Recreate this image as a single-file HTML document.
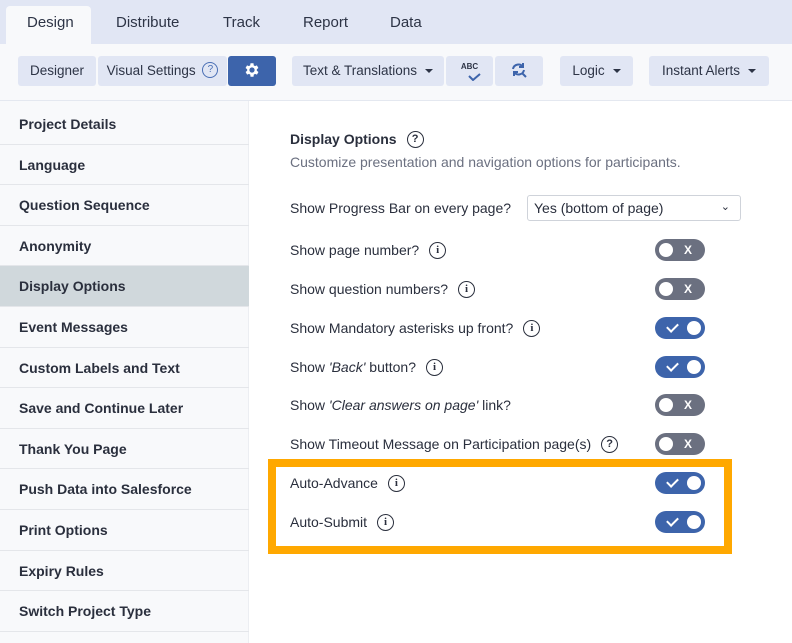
<!DOCTYPE html>
<html><head><style>
*{box-sizing:border-box;margin:0;padding:0}
body{width:792px;height:643px;overflow:hidden;font-family:"Liberation Sans",sans-serif;background:#fff;color:#2a2f3d;position:relative}
.top{position:absolute;left:0;top:0;width:792px;height:44px;background:#e1e6f4}
.tab{position:absolute;top:14px;font-size:15px;color:#2d3446}
.tabA{position:absolute;left:6px;top:6px;width:85px;height:38px;background:#f8f9fb;border-radius:4px 4px 0 0}
.bar{position:absolute;left:0;top:44px;width:792px;height:57px;background:#f8f9fb;border-bottom:1px solid #e4e8f0}
.btn{position:absolute;top:56px;height:30px;background:#e1e6f4;border-radius:3px;font-size:13.5px;color:#2d3446;line-height:30px;text-align:center}
.car{display:inline-block;width:0;height:0;border-left:4px solid transparent;border-right:4px solid transparent;border-top:4px solid #2d3446;vertical-align:middle;margin-left:8px}
.side{position:absolute;left:0;top:101px;width:249px;height:542px;background:#f8f9fb;border-right:1px solid #eceef2}
.it{position:absolute;left:0;width:249px;height:40.6px;line-height:40px;padding-left:19px;font-size:14px;font-weight:bold;color:#2a2f3d;border-bottom:1px solid #e4e6ea}
.row{position:absolute;left:290px;font-size:14px;color:#2a2f3d;height:18px;line-height:18px;display:flex;align-items:center;white-space:nowrap}
.tg{position:absolute;left:655px;width:50px;height:22px;border-radius:11px}
.off{background:#6b7080}.on{background:#3d64ab}
.off::before{content:"";position:absolute;left:4px;top:4px;width:14px;height:14px;border-radius:50%;background:#fff}
.off::after{content:"X";position:absolute;left:29px;top:4px;font-size:12px;font-weight:bold;color:#fff}
.on::before{content:"";position:absolute;left:32px;top:4px;width:14px;height:14px;border-radius:50%;background:#fff}
.on::after{content:"";position:absolute;left:12px;top:6px;width:9px;height:5px;border-left:2px solid #fff;border-bottom:2px solid #fff;transform:rotate(-45deg)}
.i{display:inline-block;flex:none;width:17px;height:17px;border:1.7px solid #2a2f3d;border-radius:50%;font-size:11px;font-weight:bold;text-align:center;line-height:14px;margin-left:10px;font-family:"Liberation Serif",serif}
.q{font-family:"Liberation Sans",sans-serif}
</style></head><body>
<div class="top"></div>
<div class="tabA"></div>
<div class="tab" style="left:27px">Design</div>
<div class="tab" style="left:116px">Distribute</div>
<div class="tab" style="left:223px">Track</div>
<div class="tab" style="left:303px">Report</div>
<div class="tab" style="left:390px">Data</div>
<div class="bar"></div>
<div class="btn" style="left:18px;width:78px">Designer</div>
<div class="btn" style="left:98px;width:129px">Visual Settings <span style="display:inline-block;width:16px;height:16px;border:1.5px solid #4a6fb5;border-radius:50%;font-size:10px;line-height:13px;color:#4a6fb5;vertical-align:middle;margin-left:3px;position:relative;top:-1px">?</span></div>
<div class="btn" style="left:228px;width:48px;background:#3d64ab"><svg width="18" height="18" viewBox="0 0 24 24" style="vertical-align:-4px"><path fill="#fff" d="M19.4 13a7.5 7.5 0 0 0 0-2l2.1-1.6-2-3.5-2.5 1a7 7 0 0 0-1.7-1L15 3h-4l-.4 2.9a7 7 0 0 0-1.7 1l-2.5-1-2 3.5L6.6 11a7.5 7.5 0 0 0 0 2l-2.1 1.6 2 3.5 2.5-1a7 7 0 0 0 1.7 1L11 21h4l.4-2.9a7 7 0 0 0 1.7-1l2.5 1 2-3.5zM13 15.5a3.5 3.5 0 1 1 0-7 3.5 3.5 0 0 1 0 7z" transform="translate(-1 0)"/></svg></div>
<div class="btn" style="left:292px;width:152px">Text &amp; Translations<span class="car"></span></div>
<div class="btn" style="left:446px;width:47px;font-size:8px;line-height:22px;font-weight:bold">ABC<svg width="14" height="8" viewBox="0 0 14 8" style="position:absolute;left:21px;top:17px"><path d="M2 3l4 4 7-6" stroke="#3d64ab" stroke-width="2" fill="none"/></svg></div>
<div class="btn" style="left:495px;width:48px"><svg width="18" height="18" viewBox="0 0 18 18" style="vertical-align:-4px"><path d="M3 8a5.5 5.5 0 0 1 10-2M14 9a5.5 5.5 0 0 1-10 2M13 2v4h-4M4 15v-4h4M12 12l4 4" stroke="#3d64ab" stroke-width="2" fill="none"/></svg></div>
<div class="btn" style="left:560px;width:73px">Logic<span class="car"></span></div>
<div class="btn" style="left:649px;width:120px">Instant Alerts<span class="car"></span></div>

<div class="side">
<div class="it" style="top:3px">Project Details</div>
<div class="it" style="top:43.6px">Language</div>
<div class="it" style="top:84.2px">Question Sequence</div>
<div class="it" style="top:124.8px">Anonymity</div>
<div class="it" style="top:165.4px;background:#d0d8dc">Display Options</div>
<div class="it" style="top:206px">Event Messages</div>
<div class="it" style="top:246.6px">Custom Labels and Text</div>
<div class="it" style="top:287.2px">Save and Continue Later</div>
<div class="it" style="top:327.8px">Thank You Page</div>
<div class="it" style="top:368.4px">Push Data into Salesforce</div>
<div class="it" style="top:409px">Print Options</div>
<div class="it" style="top:449.6px">Expiry Rules</div>
<div class="it" style="top:490.2px">Switch Project Type</div>
</div>

<div class="row" style="top:130px;font-weight:bold">Display Options <span class="i q">?</span></div>
<div class="row" style="top:153px;color:#6b7080">Customize presentation and navigation options for participants.</div>
<div class="row" style="top:199px">Show Progress Bar on every page?</div>
<div style="position:absolute;left:527px;top:195px;width:214px;height:26px;border:1px solid #cfd3da;border-radius:3px;font-size:14px;line-height:24px;padding-left:6px">Yes (bottom of page)<span style="position:absolute;right:10px;top:-1px;font-size:11px">&#8964;</span></div>
<div class="row" style="top:241px">Show page number? <span class="i">i</span></div><div class="tg off" style="top:239px"></div>
<div class="row" style="top:280px">Show question numbers? <span class="i">i</span></div><div class="tg off" style="top:278px"></div>
<div class="row" style="top:319px">Show Mandatory asterisks up front? <span class="i">i</span></div><div class="tg on" style="top:317px"></div>
<div class="row" style="top:358px">Show&nbsp;<i>'Back'</i>&nbsp;button? <span class="i">i</span></div><div class="tg on" style="top:356px"></div>
<div class="row" style="top:396px">Show&nbsp;<i>'Clear answers on page'</i>&nbsp;link?</div><div class="tg off" style="top:394px"></div>
<div class="row" style="top:435px">Show Timeout Message on Participation page(s) <span class="i q">?</span></div><div class="tg off" style="top:433px"></div>
<div style="position:absolute;left:268px;top:459px;width:464px;height:95px;border:8px solid #ffa800"></div>
<div class="row" style="top:474px">Auto-Advance <span class="i">i</span></div><div class="tg on" style="top:472px"></div>
<div class="row" style="top:513px">Auto-Submit <span class="i">i</span></div><div class="tg on" style="top:511px"></div>
</body></html>
